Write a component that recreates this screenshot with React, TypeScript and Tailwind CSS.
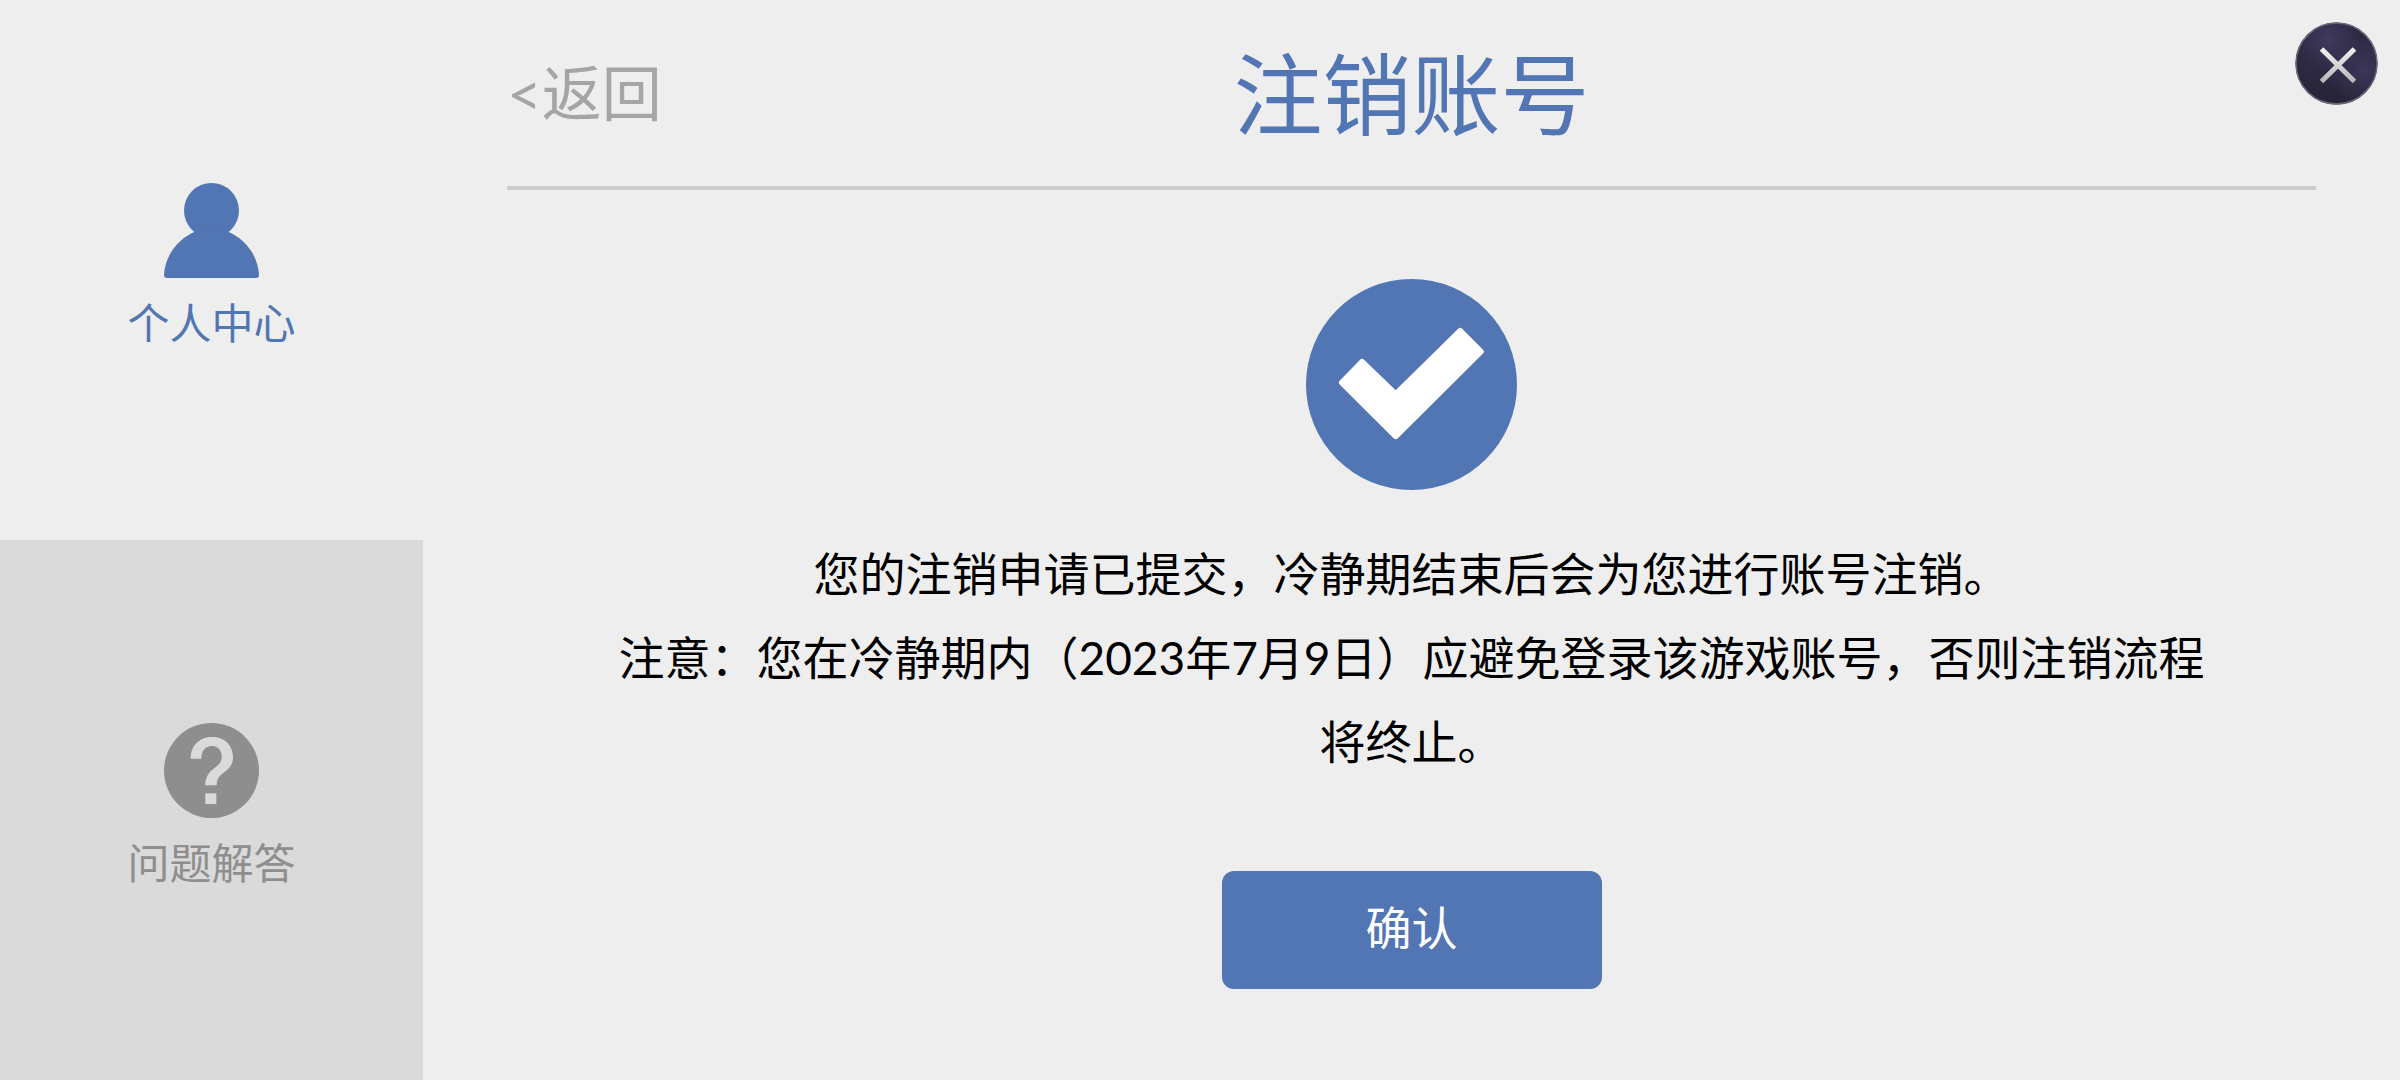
import React from "react";

function PersonIcon() {
  return (
    <svg className="size-[95px]" viewBox="0 0 95 95" fill="currentColor" aria-hidden="true">
      <circle cx="47.5" cy="27.5" r="27.5" />
      <path d="M0 92C1 68 22 45.500 47.500 45.500S94 68 95 92Q95 95 92 95H3Q0 95 0 92Z" />
    </svg>
  );
}

function QuestionIcon() {
  return (
    <svg className="size-[95px]" viewBox="0 0 95 95" aria-hidden="true">
      <circle cx="47.5" cy="47.5" r="47.5" fill="currentColor" />
      <g fill="#dadada">
        <path d="M26.7 35.7C26.7 22 36 14 48 14C60.500 14 69 22 69 34.500C69 49.500 52.700 48 52.700 62.300H41.300C41.300 44.500 57.700 45.500 57.700 34C57.700 27 54 23 48 23C41 23 37.300 28 37.300 35.700Z" />
        <rect x="41.300" y="70.300" width="11" height="10.700" />
      </g>
    </svg>
  );
}

function SuccessIcon() {
  return (
    <svg className="size-[211px]" viewBox="0 0 211 211" role="img" aria-label="已提交">
      <circle cx="105.500" cy="105.500" r="105.500" fill="#5275b3" />
      <path
        d="M36 103.500L56 83L89.700 115.500L154.300 52L174.700 72.500L89.700 157Z"
        fill="#fff"
        stroke="#fff"
        strokeWidth="6"
        strokeLinejoin="round"
      />
    </svg>
  );
}

function CloseIcon() {
  return (
    <svg className="size-[83px]" viewBox="0 0 83 83" aria-hidden="true">
      <defs>
        <radialGradient id="disc" cx="0.400" cy="0.200" r="0.800">
          <stop offset="0" stopColor="#403a5c" />
          <stop offset="0.500" stopColor="#2d2943" />
          <stop offset="1" stopColor="#262336" />
        </radialGradient>
        <radialGradient id="glow" cx="0.850" cy="0.600" r="0.450">
          <stop offset="0" stopColor="#48416a" stopOpacity="0.600" />
          <stop offset="1" stopColor="#48416a" stopOpacity="0" />
        </radialGradient>
        <linearGradient id="cross" gradientUnits="userSpaceOnUse" x1="0" y1="25" x2="0" y2="61">
          <stop offset="0" stopColor="#f5f5f5" />
          <stop offset="1" stopColor="#b5b5b5" />
        </linearGradient>
      </defs>
      <circle cx="41.500" cy="41.500" r="41" fill="url(#disc)" />
      <circle cx="41.500" cy="41.500" r="40.500" fill="url(#glow)" stroke="#6b6878" strokeWidth="1.500" />
      <path d="M26.500 27L59.500 59.500M59.500 27L26.500 59.500" stroke="url(#cross)" strokeWidth="5" />
    </svg>
  );
}

export default function App() {
  return (
    <div className="relative flex min-h-screen bg-[#eeeeee] font-[Lato,'Noto_Sans_CJK_SC',sans-serif]">
      <nav className="flex w-[423px] shrink-0 flex-col text-[42px] leading-[68px]">
        <button type="button" aria-current="page" className="flex flex-1 flex-col items-center justify-center gap-[11px] text-[#5275b3]">
          <PersonIcon />
          <span>个人中心</span>
        </button>
        <button type="button" className="flex flex-1 flex-col items-center justify-center gap-[11px] bg-[#dadada] text-[#8e8e8e]">
          <QuestionIcon />
          <span>问题解答</span>
        </button>
      </nav>

      <main className="flex min-w-0 flex-1 flex-col px-[84px]">
        <header className="grid h-[190px] grid-cols-[1fr_auto_1fr] items-center border-b-4 border-[#cccccc]">
          <button type="button" className="justify-self-start text-[60px] leading-none text-[#a5a5a5]">
            &lt;返回
          </button>
          <h1 className="text-[89px] leading-none text-[#5275b3]">注销账号</h1>
        </header>

        <section className="flex flex-col items-center pt-[89px]">
          <SuccessIcon />
          <div className="mt-[42px] px-[90px] text-center text-[46px] leading-[84px] text-black">
            <p>您的注销申请已提交，冷静期结束后会为您进行账号注销。</p>
            <p>注意：您在冷静期内（2023年7月9日）应避免登录该游戏账号，否则注销流程将终止。</p>
          </div>
          <button type="button" className="mt-[87px] h-[118px] w-[380px] rounded-xl bg-[#5275b3] pb-1 text-[46px] leading-none text-white">
            确认
          </button>
        </section>
      </main>

      <button type="button" aria-label="关闭" className="absolute top-[22px] right-[22px] rounded-full">
        <CloseIcon />
      </button>
    </div>
  );
}
